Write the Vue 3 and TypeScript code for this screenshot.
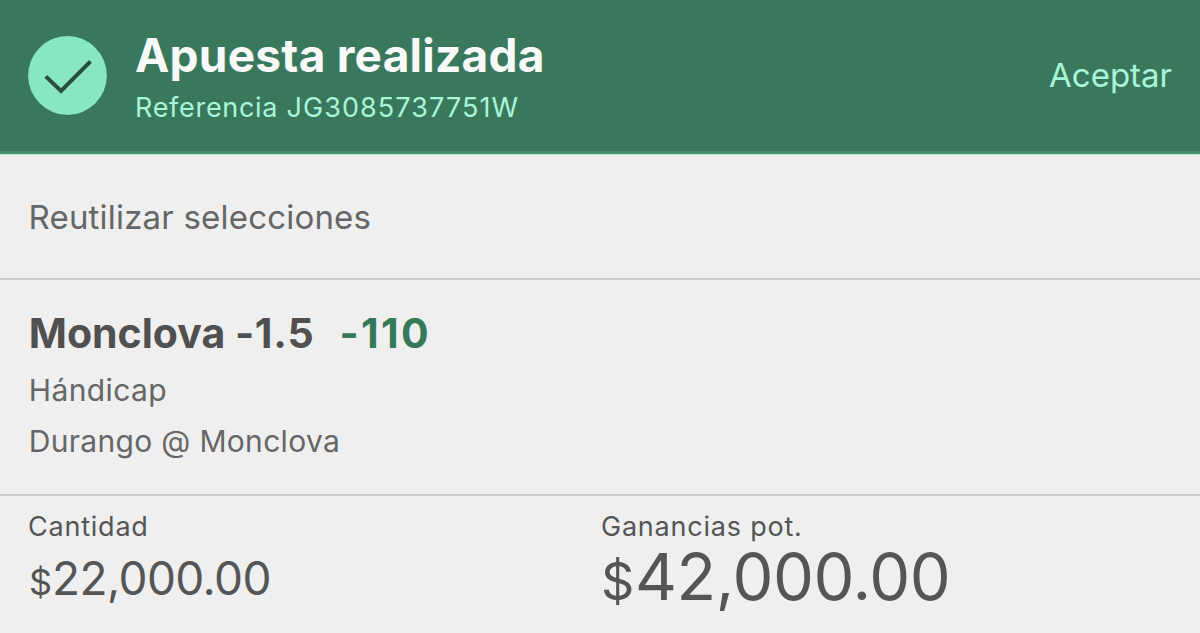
<script setup lang="ts">
interface Amount {
  label: string
  value: string
  large: boolean
}

const amounts: Amount[] = [
  { label: 'Cantidad', value: '22,000.00', large: false },
  { label: 'Ganancias pot.', value: '42,000.00', large: true },
]
</script>

<template>
  <main class="receipt">
    <header class="header">
      <svg class="check" viewBox="0 0 79 79" aria-hidden="true">
        <circle cx="39.5" cy="39.5" r="39.4" />
        <path d="M17.8 40.4 L33 55 L62.5 25.4" />
      </svg>
      <div class="heading">
        <h1 class="title">Apuesta realizada</h1>
        <p class="reference">Referencia <span class="code">JG3085737751W</span></p>
      </div>
      <a class="accept">Aceptar</a>
    </header>
    <section class="reuse">Reutilizar selecciones</section>
    <section class="bet">
      <h2 class="pick"><span>Monclova <span class="line">-1.5</span></span><span class="odds">-110</span></h2>
      <p class="market">Hándicap</p>
      <p class="event">Durango @ Monclova</p>
    </section>
    <section class="amounts">
      <div v-for="a in amounts" :key="a.label" class="amount" :class="{ large: a.large }">
        <div class="label">{{ a.label }}</div>
        <div class="value"><span class="currency">$</span><span>{{ a.value }}</span></div>
      </div>
    </section>
  </main>
</template>

<style>
body {
  margin: 0;
  background: #efefef;
}
</style>

<style scoped>
.receipt {
  width: 1200px;
  height: 633px;
  overflow: hidden;
  background: #efefef;
  color: #666;
  font-family: Inter, "Liberation Sans", sans-serif;
  white-space: nowrap;
}
h1, h2, p { margin: 0; }
.header {
  box-sizing: border-box;
  height: 155px;
  display: flex;
  background: linear-gradient(#3a785d 151px, #438f6d 151px, #438f6d 154px, #b4e4cd 154px);
  padding: 0 28px;
}
.check { width: 79px; height: 79px; margin: 36px 28px 0 0; }
.check circle { fill: #88e7c3; }
.check path { fill: none; stroke: #2b4d3f; stroke-width: 4; }
.heading { flex: 1; padding-top: 27px; }
.title { font-size: 46px; line-height: 56px; font-weight: 700; color: #f8faf9; letter-spacing: 0.24px; }
.reference { font-size: 27px; line-height: 34px; padding-top: 8px; color: #a9f5d8; letter-spacing: 0.7px; }
.code { letter-spacing: 1.08px; }
.accept { font-size: 33px; line-height: 40px; padding-top: 55px; color: #a9f5d8; letter-spacing: 0; }
.reuse {
  box-sizing: border-box;
  height: 125px;
  padding: 42px 28px 0 28.5px;
  border-bottom: 2px solid #cdcdcd;
  font-size: 33px;
  line-height: 40px;
  letter-spacing: 0.2px;
}
.bet {
  box-sizing: border-box;
  height: 216px;
  padding: 27px 28px 0 28.7px;
  border-bottom: 2px solid #cdcdcd;
}
.pick { display: flex; gap: 25px; font-size: 41px; line-height: 52px; color: #505050; }
.line { letter-spacing: 0.8px; }
.odds { color: #35795a; letter-spacing: 2.3px; }
.market { font-size: 30px; line-height: 36px; padding-top: 13px; letter-spacing: 0.4px; }
.event { font-size: 30px; line-height: 36px; padding-top: 15px; letter-spacing: 0.32px; }
.amounts { display: grid; grid-template-columns: 573px 1fr; padding: 14px 28px 0; color: #555; }
.label { font-size: 27px; line-height: 34px; letter-spacing: 0.78px; }
.value { display: flex; align-items: baseline; font-size: 46px; line-height: 56px; padding: 6px 0 0 1px; letter-spacing: -0.6px; }
.currency { font-size: 36px; letter-spacing: 0; }
.large .value { font-size: 65px; line-height: 64px; padding: 1px 0 0; letter-spacing: -0.4px; }
.large .currency { font-size: 52px; letter-spacing: 0.5px; }
</style>
